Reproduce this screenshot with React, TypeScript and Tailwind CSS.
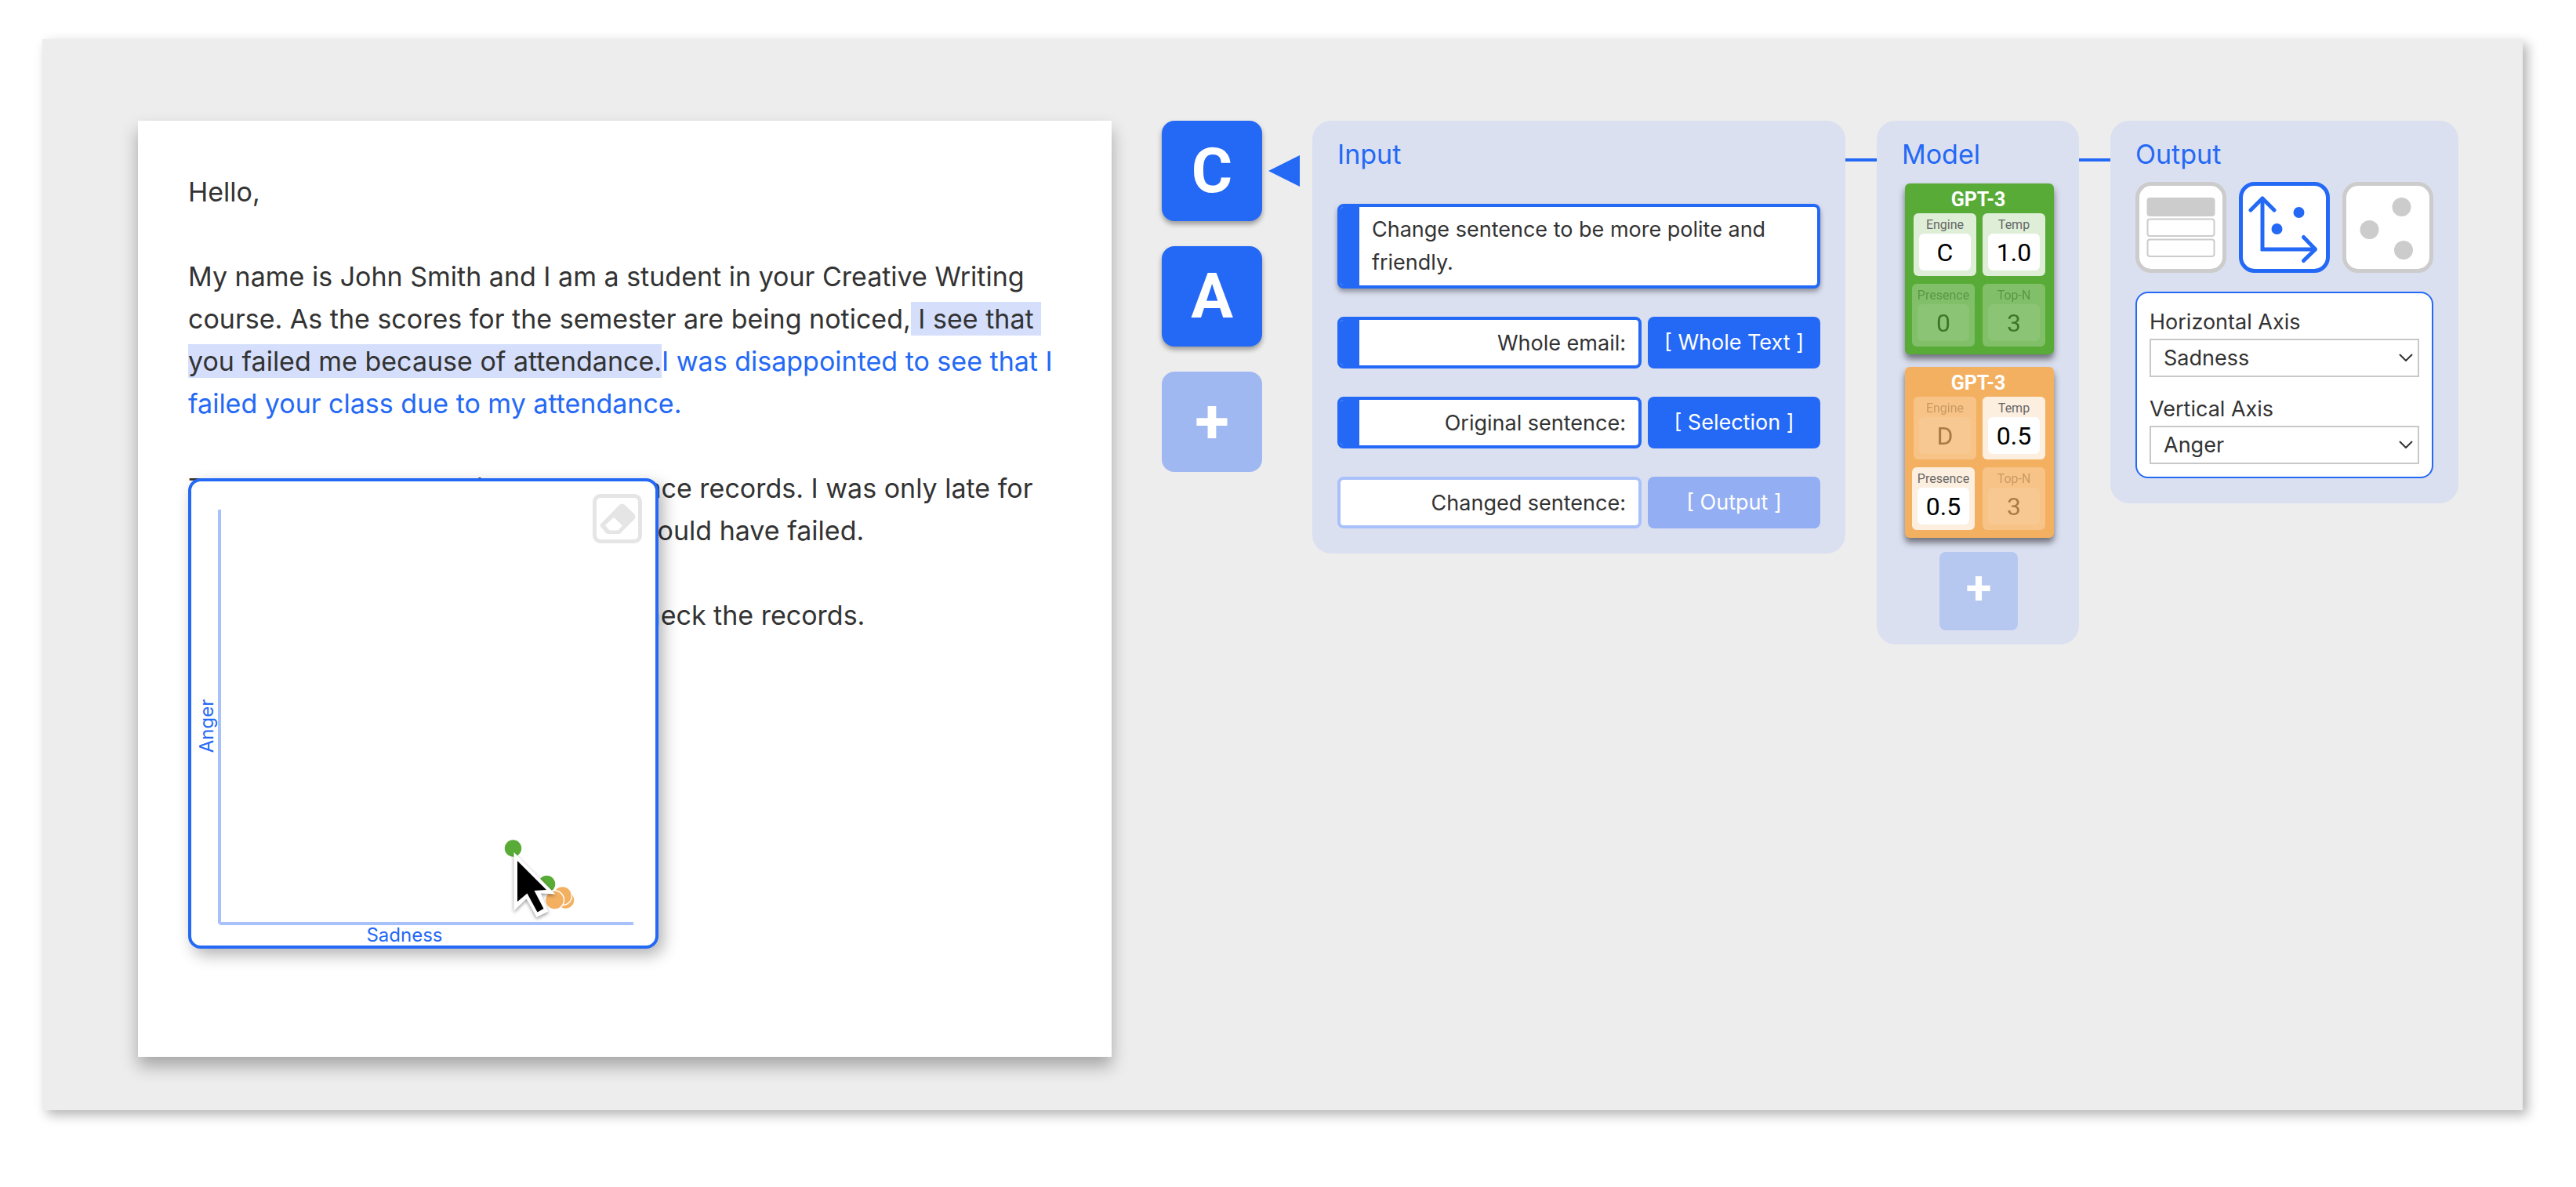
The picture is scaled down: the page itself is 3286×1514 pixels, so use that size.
import { useId, type ReactNode } from "react";

function EraserIcon() {
  return (
    <svg viewBox="0 0 46 40" className="h-10 w-[46px]" fill="#e5e5e5" aria-hidden="true">
      <path
        fillRule="evenodd"
        d="M1 26.5 Q0 28 1 29.5 L8 38 Q9 39 10.500 39 L24 39 Q25.500 39 26.500 38 L44 20.500 Q47 17 44 13.500 L32 2 Q28.500 -1 25 2 Z M18 18 L29 28.500 L23.500 34.500 L12.500 34.500 L7 28 Z"
      />
    </svg>
  );
}

function ScatterPlot() {
  return (
    <figure className="absolute top-[456px] left-16 h-[600px] w-[600px] rounded-2xl border-4 border-[#2469f6] bg-white shadow-[6px_8px_20px_rgba(0,0,0,0.3)]">
      <svg viewBox="0 0 592 592" className="h-full w-full overflow-visible" role="img" aria-label="Sadness against Anger">
        <path d="M36 36V564" stroke="#a9c1fb" strokeWidth="4" />
        <path d="M36 564H564" stroke="#a9c1fb" strokeWidth="4" />
        <text x="272" y="587" textAnchor="middle" fontSize="24" fill="#2469f6">
          Sadness
        </text>
        <text transform="translate(28 312) rotate(-90)" textAnchor="middle" fontSize="24" fill="#2469f6">
          Anger
        </text>
        <g stroke="white" strokeWidth="1.5">
          <circle cx="410.500" cy="468" r="11.5" fill="#59ab38" />
          <circle cx="453.500" cy="513.500" r="11.5" fill="#59ab38" />
          <circle cx="477.500" cy="534" r="11.5" fill="#f4b061" />
          <circle cx="473.500" cy="528.500" r="12" fill="#f4b061" />
          <circle cx="463.500" cy="534" r="12" fill="#f4b061" />
        </g>
        <g className="drop-shadow-[0_2px_2px_rgba(0,0,0,0.4)]">
          <path d="M411.500 473 L464.500 526.500 L446 525.500 L455.500 548.500 L440.500 556 L427.500 532.500 L411.500 548 Z" fill="white" />
          <path d="M416 484 L453 521 L437.500 522 L449.500 545 L441.500 549.500 L428.500 525.500 L416 536 Z" fill="black" />
        </g>
      </svg>
      <button
        type="button"
        aria-label="Erase"
        className="absolute top-4 right-[17px] flex h-[63px] w-[63px] items-center justify-center rounded-[10px] border-[5px] border-[#e5e5e5] bg-white"
      >
        <EraserIcon />
      </button>
    </figure>
  );
}

function Paper() {
  return (
    <article className="relative min-h-[1194px] min-w-0 flex-1 bg-white p-16 text-[34px] leading-[54px] text-[#333] shadow-[0_12px_20px_rgba(0,0,0,0.3)]">
      <p>Hello,</p>
      <p className="mt-[54px] whitespace-nowrap">
        My name is John Smith and I am a student in your Creative Writing
        <br />
        course. As the scores for the semester are being noticed,
        <mark className="bg-[#d5dffc] py-px whitespace-pre text-inherit">
          {" I see that "}
          <br />
          you failed me because of attendance.
        </mark>
        <span className="text-[#2469f6]">
          I was disappointed to see that I
          <br />
          failed your class due to my attendance.
        </span>
      </p>
      <p className="mt-[54px] whitespace-nowrap">
        There may be an error in my attendance records. I was only late for
        <br />a few days and I do not think that I should have failed.
      </p>
      <p className="mt-[54px] whitespace-nowrap">I would appreciate it if you could recheck the records.</p>
      <ScatterPlot />
    </article>
  );
}

function Tools() {
  const solid =
    "h-32 w-32 rounded-2xl bg-[#2469f6] text-center font-[family-name:Roboto] text-[80px] leading-[128px] font-bold text-white shadow-[0_4px_6px_rgba(0,0,0,0.35)]";
  return (
    <nav className="flex shrink-0 flex-col gap-8">
      <button type="button" className={solid}>
        C
      </button>
      <button type="button" className={solid}>
        A
      </button>
      <button
        type="button"
        aria-label="Add tool"
        className="h-32 w-32 rounded-2xl bg-[#a0b8f1] text-center font-[family-name:Roboto] text-[80px] leading-[128px] font-bold text-white"
      >
        +
      </button>
    </nav>
  );
}

function Panel({ title, width, children }: { title: string; width: string; children: ReactNode }) {
  return (
    <section className={`shrink-0 rounded-3xl bg-[#dbe0f0] px-8 pt-4 ${width}`}>
      <h2 className="text-[34px] leading-[54px] text-[#2469f6]">{title}</h2>
      {children}
    </section>
  );
}

function Connector() {
  return <div className="mt-12 h-1 w-10 shrink-0 bg-[#2469f6]" />;
}

function PromptRow({ text, tag, faded }: { text: string; tag: string; faded?: boolean }) {
  return (
    <div className="flex gap-2">
      <div
        className={
          faded
            ? "flex flex-1 overflow-hidden rounded-lg border-4 border-[#a9c1fb] bg-white"
            : "flex flex-1 overflow-hidden rounded-lg border-4 border-[#2469f6] bg-white"
        }
      >
        {!faded && <div className="w-6 bg-[#2469f6]" />}
        <input
          aria-label={`${tag} prefix`}
          defaultValue={text}
          className="h-[58px] min-w-0 flex-1 px-4 text-right outline-none"
        />
      </div>
      <button
        type="button"
        className={
          faded
            ? "w-[220px] rounded-lg bg-[#93aef3] text-center text-white"
            : "w-[220px] rounded-lg bg-[#2469f6] text-center text-white"
        }
      >
        [ {tag} ]
      </button>
    </div>
  );
}

function InputPanel() {
  return (
    <Panel title="Input" width="w-[680px]">
      <div className="mt-9 flex flex-col gap-9 pb-8 text-[27px] leading-[42px] text-[#333]">
        <div className="flex overflow-hidden rounded-lg border-4 border-[#2469f6] bg-white shadow-[0_4px_6px_rgba(0,0,0,0.35)]">
          <div className="w-6 bg-[#2469f6]" />
          <textarea
            aria-label="Instruction"
            rows={2}
            defaultValue={"Change sentence to be more polite and friendly."}
            className="block h-[100px] flex-1 resize-none overflow-hidden px-4 py-2 outline-none"
          />
        </div>
        <PromptRow text="Whole email:" tag="Whole Text" />
        <PromptRow text="Original sentence:" tag="Selection" />
        <PromptRow text="Changed sentence:" tag="Output" faded />
      </div>
    </Panel>
  );
}

type Setting = { label: string; value: string; on?: boolean };

function Cell({ label, value, on }: Setting) {
  const id = useId();
  return (
    <div
      className={
        on
          ? "flex h-20 w-20 flex-col items-center rounded-md bg-white/80 pt-1"
          : "flex h-20 w-20 flex-col items-center rounded-md bg-white/80 pt-1 opacity-30"
      }
    >
      <label htmlFor={id} className="text-[16px] leading-[22px] text-[#666]">
        {label}
      </label>
      <input
        id={id}
        defaultValue={value}
        className="h-[47px] w-[66px] rounded-md bg-white text-center text-[32px] text-black outline-none"
      />
    </div>
  );
}

function ModelCard({ color, cells }: { color: string; cells: Setting[] }) {
  return (
    <div
      className={`ml-1 flex h-[218px] w-[190px] flex-col rounded-md pr-[11px] font-[family-name:Roboto] shadow-[0_6px_8px_rgba(0,0,0,0.5)] ${color}`}
    >
      <h3 className="pt-1 pl-2 text-center text-[25px] leading-[34px] font-bold text-white">GPT-3</h3>
      <div className="flex justify-end gap-2">
        {cells.slice(0, 2).map((c) => (
          <Cell key={c.label} {...c} />
        ))}
      </div>
      <div className="mt-[10px] flex justify-end gap-[10px]">
        {cells.slice(2).map((c) => (
          <Cell key={c.label} {...c} />
        ))}
      </div>
    </div>
  );
}

function ModelPanel() {
  return (
    <Panel title="Model" width="w-[258px]">
      <div className="mt-[10px] flex flex-col gap-4 pb-[18px]">
        <ModelCard
          color="bg-[#59ab38]"
          cells={[
            { label: "Engine", value: "C", on: true },
            { label: "Temp", value: "1.0", on: true },
            { label: "Presence", value: "0" },
            { label: "Top-N", value: "3" },
          ]}
        />
        <ModelCard
          color="bg-[#f4b061]"
          cells={[
            { label: "Engine", value: "D" },
            { label: "Temp", value: "0.5", on: true },
            { label: "Presence", value: "0.5", on: true },
            { label: "Top-N", value: "3" },
          ]}
        />
        <button
          type="button"
          aria-label="Add model"
          className="mt-[2px] ml-12 h-[100px] w-[100px] rounded-lg bg-[#b6c8f0] pb-2 text-center font-[family-name:Roboto] text-[60px] leading-[92px] font-bold text-white"
        >
          +
        </button>
      </div>
    </Panel>
  );
}

function ViewButton({ label, active, children }: { label: string; active?: boolean; children: ReactNode }) {
  return (
    <button
      type="button"
      aria-label={label}
      className={
        active
          ? "h-[116px] w-[116px] rounded-[20px] border-[5px] border-[#2469f6] bg-white"
          : "h-[116px] w-[116px] rounded-[20px] border-[5px] border-[#ccc] bg-white"
      }
    >
      <svg viewBox="0 0 106 106" className="h-full w-full" aria-hidden="true">
        {children}
      </svg>
    </button>
  );
}

function AxisSelect({ label, value, options }: { label: string; value: string; options: string[] }) {
  const id = useId();
  return (
    <div className="flex flex-col">
      <label htmlFor={id}>{label}</label>
      <div className="relative">
        <select
          id={id}
          defaultValue={value}
          className="block h-[49px] w-full appearance-none border-2 border-[#c8c8c8] bg-white pl-4 outline-none"
        >
          {options.map((o) => (
            <option key={o}>{o}</option>
          ))}
        </select>
        <svg
          viewBox="0 0 18 10"
          className="pointer-events-none absolute top-[19px] right-2 h-[10px] w-[18px]"
          fill="none"
          stroke="#333"
          strokeWidth="2"
          aria-hidden="true"
        >
          <path d="M1 1L9 9L17 1" />
        </svg>
      </div>
    </div>
  );
}

function OutputPanel() {
  const options = ["Sadness", "Anger", "Joy", "Fear"];
  return (
    <Panel title="Output" width="w-[444px]">
      <div className="mt-2 flex gap-4">
        <ViewButton label="List view">
          <rect x="9.500" y="15" width="87" height="24" rx="4" fill="#ccc" />
          <rect x="10.500" y="42.500" width="85" height="21.500" rx="3" fill="none" stroke="#ccc" strokeWidth="2" />
          <rect x="10.500" y="68.500" width="85" height="21.500" rx="3" fill="none" stroke="#ccc" strokeWidth="2" />
        </ViewButton>
        <ViewButton label="Axis view" active>
          <g fill="none" stroke="#2469f6" strokeWidth="5">
            <path d="M25 83V18" />
            <path d="M23 81H91" />
            <path d="M10 31L25 16L40 31" strokeLinecap="round" strokeLinejoin="round" />
            <path d="M77.500 65.500L92.500 81L77.500 95.500" strokeLinecap="round" strokeLinejoin="round" />
          </g>
          <circle cx="71.500" cy="34" r="7" fill="#2469f6" />
          <circle cx="43.500" cy="55" r="7" fill="#2469f6" />
        </ViewButton>
        <ViewButton label="Cluster view">
          <g fill="#ccc">
            <circle cx="70.500" cy="27" r="12" />
            <circle cx="29.500" cy="56" r="12" />
            <circle cx="73" cy="82" r="12" />
          </g>
        </ViewButton>
      </div>
      <div className="mt-6 mb-8 flex flex-col gap-5 rounded-2xl border-2 border-[#2469f6] bg-white p-4 text-[27px] leading-[42px] text-[#333]">
        <AxisSelect label="Horizontal Axis" value="Sadness" options={options} />
        <AxisSelect label="Vertical Axis" value="Anger" options={options} />
      </div>
    </Panel>
  );
}

export default function App() {
  return (
    <div className="bg-white pt-[50px] pr-[68px] pb-[98px] pl-[54px] font-[Inter,sans-serif]">
      <main className="flex items-start bg-[#ededed] pt-[104px] pr-[82px] pb-[68px] pl-[122px] shadow-[6px_6px_14px_rgba(0,0,0,0.3)]">
        <Paper />
        <div className="ml-16 flex shrink-0 items-start">
          <Tools />
          <svg viewBox="0 0 40 40" className="mt-11 mr-4 ml-2 h-10 w-10 shrink-0" fill="#2469f6" aria-hidden="true">
            <path d="M0 20L40 0V40Z" />
          </svg>
          <InputPanel />
          <Connector />
          <ModelPanel />
          <Connector />
          <OutputPanel />
        </div>
      </main>
    </div>
  );
}
